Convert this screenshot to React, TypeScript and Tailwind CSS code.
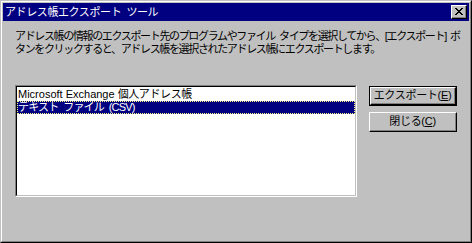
import React from 'react';

const font = { fontFamily: '"Liberation Sans", "Noto Sans CJK JP", sans-serif' };

const Button: React.FC<{ label: string; hotkey: string; isDefault?: boolean }> = ({ label, hotkey, isDefault }) => (
  <div className={`w-[88px] h-[20px] ${isDefault ? 'border border-black' : ''}`}>
    <div className="w-full h-full border-t border-l border-white border-r border-b border-r-black border-b-black">
      <div className="w-full h-full border-r border-b border-r-[#808080] border-b-[#808080] flex items-center justify-center text-[11px] tracking-[-0.3px] text-black leading-none">
        <span>
          {label}(<span className="underline underline-offset-1">{hotkey}</span>)
        </span>
      </div>
    </div>
  </div>
);

const App: React.FC = () => {
  return (
    <div className="w-[472px] h-[243px] bg-[#c0c0c0]" style={font}>
      <div className="w-full h-full border-t border-l border-[#c0c0c0] border-r border-b border-r-black border-b-black">
        <div className="w-full h-full border-t border-l border-white border-r border-b border-r-[#808080] border-b-[#808080] p-px flex flex-col">
          {/* Title bar */}
          <div className="h-[18px] bg-[#000080] flex items-center justify-between pl-[2px] pr-[2px]">
            <span className="text-white text-[11px] tracking-[-0.4px] leading-none">アドレス帳エクスポート{'\u2002'}ツール</span>
            <div className="w-[16px] h-[14px] bg-[#c0c0c0] border-t border-l border-white border-r border-b border-r-black border-b-black">
              <div className="w-full h-full border-r border-b border-r-[#808080] border-b-[#808080] flex items-center justify-center">
                <svg width="8" height="7" viewBox="0 0 8 7" shapeRendering="crispEdges">
                  <path d="M0 0h2v1h-2zM6 0h2v1h-2zM1 1h2v1h-2zM5 1h2v1h-2zM2 2h4v1h-4zM3 3h2v1h-2zM2 4h4v1h-4zM1 5h2v1h-2zM5 5h2v1h-2zM0 6h2v1h-2zM6 6h2v1h-2z" fill="#000" />
                </svg>
              </div>
            </div>
          </div>

          {/* Body */}
          <div className="flex flex-col pl-[12px] pt-[9px]">
            <p className="text-[11px] leading-[13px] tracking-[-1.35px] text-black whitespace-nowrap">
              アドレス帳の情報のエクスポート先のプログラムやファイル{'\u2002'}タイプを選択してから、[エクスポート]{'\u2002'}ボ
              <br />
              タンをクリックすると、アドレス帳を選択されたアドレス帳にエクスポートします。
            </p>

            <div className="flex gap-[12px] mt-[29px]">
              {/* List box */}
              <div className="w-[342px] h-[112px] border-t border-l border-[#808080] border-r border-b border-r-white border-b-white">
                <div className="w-full h-full bg-white border-t border-l border-black border-r border-b border-r-[#c0c0c0] border-b-[#c0c0c0] pt-px">
                  <div className="h-[13px] pl-px flex items-center text-[11px] leading-none text-black whitespace-nowrap">
                    <span>Microsoft Exchange <span className="tracking-[-0.4px]">個人アドレス帳</span></span>
                  </div>
                  <div className="h-[13px] pl-px flex items-center text-[11px] leading-none text-white bg-[#000080] outline outline-1 outline-dotted outline-[#ffff80] -outline-offset-1 whitespace-nowrap">
                    <span className="tracking-[-0.8px]">テキスト{'\u2002'}ファイル{'\u2002'}(CSV)</span>
                  </div>
                </div>
              </div>

              {/* Buttons */}
              <div className="flex flex-col gap-[6px] pt-px">
                <Button label="エクスポート" hotkey="E" isDefault />
                <Button label="閉じる" hotkey="C" />
              </div>
            </div>
          </div>
        </div>
      </div>
    </div>
  );
};

export default App;
